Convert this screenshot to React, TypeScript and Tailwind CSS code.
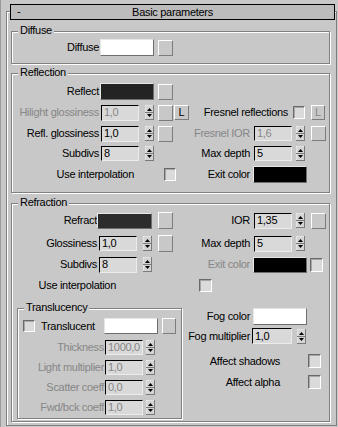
const dimText = "text-[#868686]"

function Spinner() {
  return (
    <svg width="9" height="15" viewBox="0 0 9 15" className="shrink-0">
      <rect x="0" y="0" width="9" height="15" fill="#d4d4d4" />
      <path d="M0 0H9M0 0V15" stroke="#f2f2f2" />
      <path d="M8.5 0V15M0 14.5H9M0 7.5H9" stroke="#7a7a7a" />
      <path d="M2 6L4.5 3L7 6Z" fill="#000" />
      <path d="M2 9L4.5 12L7 9Z" fill="#000" />
    </svg>
  )
}

function Field({ v, dim, className = "" }: { v: string; dim?: boolean; className?: string }) {
  return (
    <div
      className={`shrink-0 flex items-center pl-[2px] leading-none bg-[#d9d9d9] border border-t-black border-l-black border-r-[#ececec] border-b-[#ececec] ${
        dim ? dimText : "text-black"
      } ${className}`}
    >
      {v}
    </div>
  )
}

function Btn({ className = "", children, dim }: { className?: string; children?: React.ReactNode; dim?: boolean }) {
  return (
    <div
      className={`shrink-0 flex items-center justify-center leading-none bg-[#c8c8c8] border border-t-white border-l-white border-r-[#7c7c7c] border-b-[#7c7c7c] ${
        dim ? dimText : "text-black"
      } ${className}`}
    >
      {children}
    </div>
  )
}

function Check({ className = "" }: { className?: string }) {
  return (
    <div
      className={`shrink-0 bg-[#dadada] border border-t-[#6a6a6a] border-l-[#6a6a6a] border-r-white border-b-white shadow-[inset_1px_1px_0_#a6a6a6] ${className}`}
    />
  )
}

function Swatch({ className = "" }: { className?: string }) {
  return <div className={`shrink-0 border border-t-[#e6e6e6] border-l-[#e6e6e6] border-r-[#6e6e6e] border-b-[#6e6e6e] ${className}`} />
}

function Label({ children, className = "", dim }: { children: React.ReactNode; className?: string; dim?: boolean }) {
  return <div className={`shrink-0 whitespace-nowrap text-right ${dim ? dimText : ""} ${className}`}>{children}</div>
}

function Group({ title, className = "", children }: { title: string; className?: string; children?: React.ReactNode }) {
  return (
    <div className={`relative border border-[#808080] shadow-[inset_1px_1px_0_#fff,1px_1px_0_#fff] ${className}`}>
      <span className="absolute -top-[8px] left-[6px] px-[2px] leading-[13px] bg-[#c8c8c8] whitespace-nowrap">{title}</span>
      {children}
    </div>
  )
}

export default function App() {
  return (
    <div className="w-[338px] h-[427px] overflow-hidden bg-[#c8c8c8] text-black text-[11px] tracking-[-0.3px] leading-[13px] font-['Liberation_Sans',Arial,sans-serif] border-l border-l-[#9a9a9a]">
      <div className="ml-[5px] mt-[11px] w-[331px] h-[415px] border border-[#808080] shadow-[inset_1px_1px_0_#fff]">
        {/* rollout title */}
        <div className="-mt-[8px] ml-[3px] w-[325px] h-[16px] flex items-center border border-black bg-[#bcbcbc] relative">
          <span className="absolute left-[6px] top-[0px]">-</span>
          <span className="w-full text-center">Basic parameters</span>
        </div>

        {/* Diffuse */}
        <Group title="Diffuse" className="mt-[11px] ml-[4px] w-[319px] h-[33px]">
          <div className="pt-[7px] flex items-center h-[24px]">
            <Label className="w-[87px]">Diffuse</Label>
            <Swatch className="ml-[1px] w-[54px] h-[17px] bg-white" />
            <Btn className="ml-[4px] w-[15px] h-[16px]" />
          </div>
        </Group>

        {/* Reflection */}
        <Group title="Reflection" className="mt-[9px] ml-[4px] w-[319px] h-[120px]">
          <div className="pt-[9px] flex flex-col">
            <div className="flex items-center h-[17px]">
              <Label className="w-[87px]">Reflect</Label>
              <Swatch className="ml-[1px] w-[54px] h-[17px] bg-[#232323]" />
              <Btn className="ml-[4px] w-[15px] h-[16px]" />
            </div>
            <div className="mt-[4px] flex items-center h-[17px]">
              <div className="w-[178px] shrink-0 flex items-center">
                <Label dim className="w-[87px]">Hilight glossiness</Label>
                <Field dim v="1,0" className="ml-[2px] w-[38px] h-[16px]" />
                <div className="ml-[6px]"><Spinner /></div>
                <Btn className="ml-[4px] w-[15px] h-[16px]" />
                <Btn className="ml-[1px] w-[15px] h-[15px]">L</Btn>
              </div>
              <Label className="w-[98px]">Fresnel reflections</Label>
              <Check className="ml-[5px] w-[12px] h-[13px]" />
              <Btn dim className="ml-[6px] w-[14px] h-[15px]">L</Btn>
            </div>
            <div className="mt-[4px] flex items-center h-[17px]">
              <div className="w-[178px] shrink-0 flex items-center">
                <Label className="w-[87px]">Refl. glossiness</Label>
                <Field v="1,0" className="ml-[2px] w-[38px] h-[16px]" />
                <div className="ml-[6px]"><Spinner /></div>
                <Btn className="ml-[4px] w-[15px] h-[16px]" />
              </div>
              <Label dim className="w-[60px]">Fresnel IOR</Label>
              <Field dim v="1,6" className="ml-[4px] w-[38px] h-[15px]" />
              <div className="ml-[4px]"><Spinner /></div>
              <Btn className="ml-[6px] w-[15px] h-[15px]" />
            </div>
            <div className="mt-[3px] flex items-center h-[17px]">
              <div className="w-[178px] shrink-0 flex items-center">
                <Label className="w-[87px]">Subdivs</Label>
                <Field v="8" className="ml-[2px] w-[38px] h-[15px]" />
                <div className="ml-[6px]"><Spinner /></div>
              </div>
              <Label className="w-[60px]">Max depth</Label>
              <Field v="5" className="ml-[4px] w-[38px] h-[15px]" />
              <div className="ml-[4px]"><Spinner /></div>
            </div>
            <div className="mt-[4px] flex items-center h-[17px]">
              <div className="w-[178px] shrink-0 flex items-center">
                <Label className="w-[122px]">Use interpolation</Label>
                <Check className="ml-[30px] w-[12px] h-[13px]" />
              </div>
              <Label className="w-[60px]">Exit color</Label>
              <Swatch className="ml-[3px] w-[54px] h-[17px] bg-black" />
            </div>
          </div>
        </Group>

        {/* Refraction */}
        <Group title="Refraction" className="mt-[10px] ml-[4px] w-[319px] h-[219px]">
          <div className="pt-[8px] flex flex-col">
            <div className="flex items-center h-[17px]">
              <div className="w-[178px] shrink-0 flex items-center">
                <Label className="w-[85px]">Refract</Label>
                <Swatch className="w-[55px] h-[16px] bg-[#2c2c2c]" />
                <Btn className="ml-[6px] w-[15px] h-[17px]" />
              </div>
              <Label className="w-[60px]">IOR</Label>
              <Field v="1,35" className="ml-[4px] w-[38px] h-[16px]" />
              <div className="ml-[4px]"><Spinner /></div>
              <Btn className="ml-[6px] w-[15px] h-[16px]" />
            </div>
            <div className="mt-[6px] flex items-center h-[17px]">
              <div className="w-[178px] shrink-0 flex items-center">
                <Label className="w-[85px]">Glossiness</Label>
                <Field v="1,0" className="ml-[2px] w-[38px] h-[15px]" />
                <div className="ml-[6px]"><Spinner /></div>
                <Btn className="ml-[6px] w-[15px] h-[17px]" />
              </div>
              <Label className="w-[60px]">Max depth</Label>
              <Field v="5" className="ml-[4px] w-[38px] h-[16px]" />
              <div className="ml-[4px]"><Spinner /></div>
            </div>
            <div className="mt-[4px] flex items-center h-[17px]">
              <div className="w-[178px] shrink-0 flex items-center">
                <Label className="w-[85px]">Subdivs</Label>
                <Field v="8" className="ml-[2px] w-[38px] h-[16px]" />
                <div className="ml-[6px]"><Spinner /></div>
              </div>
              <Label dim className="w-[60px]">Exit color</Label>
              <Swatch className="ml-[3px] w-[54px] h-[16px] bg-black" />
              <Check className="ml-[3px] w-[13px] h-[14px]" />
            </div>
            <div className="mt-[5px] flex items-center h-[14px]">
              <Label className="w-[104px]">Use interpolation</Label>
              <Check className="ml-[83px] w-[13px] h-[13px]" />
            </div>

            <div className="mt-[16px] flex items-start">
              {/* Translucency */}
              <Group title="Translucency" className="ml-[5px] w-[165px] h-[111px] shrink-0">
                <div className="pt-[9px] flex flex-col">
                  <div className="flex items-center h-[16px]">
                    <Check className="ml-[5px] w-[12px] h-[12px]" />
                    <div className="ml-[6px] w-[60px] shrink-0 whitespace-nowrap">Translucent</div>
                    <Swatch className="ml-[3px] w-[54px] h-[16px] bg-white" />
                    <Btn className="ml-[4px] w-[14px] h-[16px]" />
                  </div>
                  {[
                    ["Thickness", "1000,0"],
                    ["Light multiplier", "1,0"],
                    ["Scatter coeff", "0,0"],
                    ["Fwd/bck coeff", "1,0"],
                  ].map(([l, v], i) => (
                    <div key={l} className={`flex items-center h-[15px] ${i === 0 ? "mt-[6px]" : "mt-[5px]"}`}>
                      <Label dim className="w-[86px]">{l}</Label>
                      <Field dim v={v} className="ml-[1px] w-[38px] h-[15px]" />
                      <div className="ml-[3px]"><Spinner /></div>
                    </div>
                  ))}
                </div>
              </Group>

              {/* Fog */}
              <div className="flex flex-col">
                <div className="flex items-center h-[17px]">
                  <Label className="w-[68px]">Fog color</Label>
                  <Swatch className="ml-[3px] w-[54px] h-[17px] bg-white" />
                </div>
                <div className="mt-[3px] flex items-center h-[16px]">
                  <Label className="w-[68px]">Fog multiplier</Label>
                  <Field v="1,0" className="ml-[2px] w-[40px] h-[16px]" />
                  <div className="ml-[5px]"><Spinner /></div>
                </div>
                <div className="mt-[10px] flex items-center h-[14px]">
                  <Label className="w-[98px]">Affect shadows</Label>
                  <Check className="ml-[28px] w-[13px] h-[14px]" />
                </div>
                <div className="mt-[7px] flex items-center h-[14px]">
                  <Label className="w-[98px]">Affect alpha</Label>
                  <Check className="ml-[28px] w-[13px] h-[14px]" />
                </div>
              </div>
            </div>
          </div>
        </Group>
      </div>
    </div>
  )
}
